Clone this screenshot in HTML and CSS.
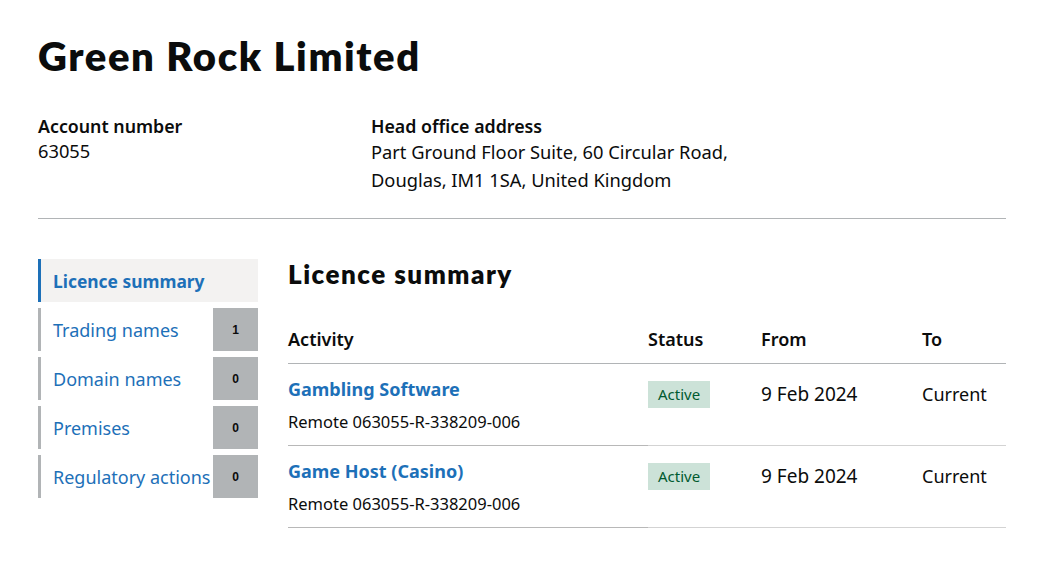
FILE: index.html
```html
<!DOCTYPE html>
<html lang="en">
<head>
<meta charset="utf-8">
<title>Green Rock Limited</title>
<link rel="stylesheet" href="styles.css">
</head>
<body>
<div class="page">
  <h1 class="title">Green Rock Limited</h1>
  <div class="details">
    <div class="detail acct">
      <div class="label">Account number</div>
      <div class="value">63055</div>
    </div>
    <div class="detail addr">
      <div class="label">Head office address</div>
      <div class="value">Part Ground Floor Suite, 60 Circular Road,<br>Douglas, IM1 1SA, United Kingdom</div>
    </div>
  </div>
  <hr class="divider">
  <div class="content">
    <nav class="sidenav">
      <a class="nav-item active" href="#"><span class="nav-text">Licence summary</span></a>
      <a class="nav-item" href="#"><span class="nav-text">Trading names</span><span class="count">1</span></a>
      <a class="nav-item" href="#"><span class="nav-text">Domain names</span><span class="count">0</span></a>
      <a class="nav-item" href="#"><span class="nav-text">Premises</span><span class="count">0</span></a>
      <a class="nav-item" href="#"><span class="nav-text">Regulatory actions</span><span class="count">0</span></a>
    </nav>
    <main class="main">
      <h2 class="section-title">Licence summary</h2>
      <table class="licences">
        <thead>
          <tr>
            <th class="c-act">Activity</th>
            <th class="c-status">Status</th>
            <th class="c-from">From</th>
            <th class="c-to">To</th>
          </tr>
        </thead>
        <tbody>
          <tr>
            <td class="c-act"><a class="act-link" href="#">Gambling Software</a><div class="ref">Remote 063055-R-338209-006</div></td>
            <td class="c-status"><span class="tag">Active</span></td>
            <td class="c-from">9 Feb 2024</td>
            <td class="c-to">Current</td>
          </tr>
          <tr>
            <td class="c-act"><a class="act-link" href="#">Game Host (Casino)</a><div class="ref">Remote 063055-R-338209-006</div></td>
            <td class="c-status"><span class="tag">Active</span></td>
            <td class="c-from">9 Feb 2024</td>
            <td class="c-to">Current</td>
          </tr>
        </tbody>
      </table>
    </main>
  </div>
</div>
</body>
</html>
```
FILE: styles.css
```css
* { box-sizing: border-box; }
html, body { margin: 0; padding: 0; background: #fff; }
body {
  font-family: "Noto Sans", "Open Sans", sans-serif;
  color: #0b0c0c;
}
.page {
  width: 968px;
  margin-left: 38px;
  padding-top: 32px;
}
.title {
  margin: 0;
  font-family: "Lato", sans-serif;
  font-weight: 800;
  font-size: 40px;
  line-height: 48px;
  letter-spacing: 1.6px;
}
.details {
  display: flex;
  margin-top: 34px;
}
.detail .label {
  font-weight: 600;
  font-size: 17.8px;
  line-height: 24px;
}
.detail .value {
  font-size: 18.3px;
  line-height: 28px;
}
.acct { width: 333px; }
.acct .value { margin-top: -1px; }
.addr .value { margin-top: 0px; }
.divider {
  border: 0;
  border-top: 1px solid #b1b4b6;
  margin: 24px 0 0 0;
}
.content {
  display: flex;
  margin-top: 40px;
}
.sidenav {
  width: 220px;
  display: flex;
  flex-direction: column;
  gap: 6px;
  flex-shrink: 0;
}
.nav-item {
  display: flex;
  align-items: stretch;
  height: 43px;
  border-left: 3px solid #b1b4b6;
  text-decoration: none;
  color: #1d70b8;
  font-size: 18px;
}
.nav-item .nav-text {
  flex: 1;
  display: flex;
  align-items: center;
  padding-left: 12px;
  white-space: nowrap;
  overflow: hidden;
  min-width: 0;
}
.nav-item.active {
  border-left-color: #1d70b8;
  background: #f3f2f1;
  font-weight: 700;
  font-size: 17.4px;
}
.count {
  width: 45px;
  flex-shrink: 0;
  background: #b1b4b6;
  color: #0b0c0c;
  font-family: "Liberation Sans", Arial, sans-serif;
  font-weight: 700;
  font-size: 12px;
  display: flex;
  align-items: center;
  justify-content: center;
}
.main {
  flex: 1;
  margin-left: 30px;
}
.section-title {
  margin: 0;
  font-family: "Lato", sans-serif;
  font-weight: 800;
  font-size: 26px;
  line-height: 30px;
  letter-spacing: 1.5px;
}
.licences {
  width: 100%;
  border-collapse: collapse;
  margin-top: 38px;
}
.licences th {
  text-align: left;
  font-weight: 600;
  font-size: 18px;
  line-height: 24px;
  padding: 0 0 12px 0;
  border-bottom: 1px solid #b1b4b6;
}
.licences td {
  vertical-align: top;
  font-size: 18px;
  padding: 13px 0 12px 0;
  border-bottom: 1px solid #d3d3d3;
}
.licences td.c-act { border-bottom-color: #b8b8b8; }
.c-act { width: 360px; }
.c-status { width: 113px; }
.c-from { width: 161px; }
.licences td.c-from, .licences td.c-to { padding-top: 17px; line-height: 26px; }
.licences td.c-from { font-size: 19px; }
.act-link {
  color: #1d70b8;
  font-weight: 700;
  font-size: 18px;
  text-decoration: none;
  line-height: 24px;
  display: block;
}
.ref {
  font-size: 16.5px;
  line-height: 22px;
  margin-top: 10px;
}
.licences td.c-status { padding-top: 17px; }
.tag {
  display: inline-block;
  background: #cce2d8;
  color: #005a30;
  font-size: 15px;
  line-height: 19px;
  padding: 4px 10px 4px 10px;
}
```
